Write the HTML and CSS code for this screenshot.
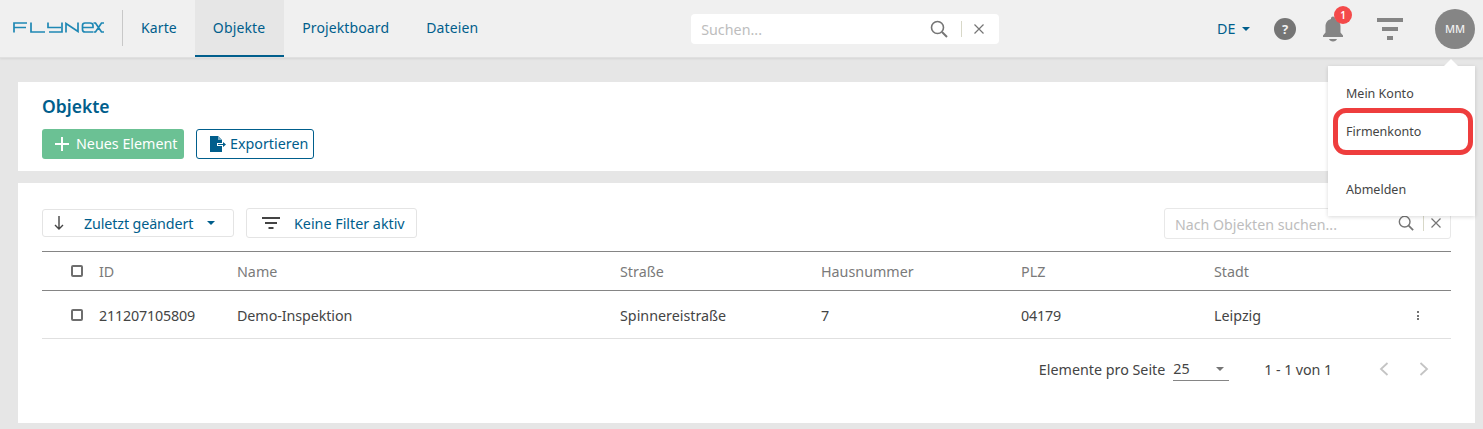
FILE: index.html
```html
<!DOCTYPE html>
<html lang="de">
<head>
<meta charset="utf-8">
<title>Objekte</title>
<link rel="stylesheet" href="styles.css">
</head>
<body>
<header class="topbar">
  <div class="logo">
    <svg width="91" height="11" viewBox="0 0 91 11" fill="none" stroke="#1f88b4" stroke-width="1.700">
      <path d="M14 1H1V10.500M1 5.500H13"/>
      <path d="M18 .5V10H32"/>
      <path d="M35 .5V5.500H48M49 .5V10H36"/>
      <path d="M53 10.500V1.500L65 9.500V.5"/>
      <path d="M69.500 5.500H79M80 10H72Q69.500 10 69.500 7.500V3.500Q69.500 1 72 1H77Q80 1 80 3.500V5.500H79"/>
      <path d="M80.500 1H82.500L85.500 5.500L82.500 10H80.500M91 1H88.500L85.500 5.500L88.500 10H91"/>
    </svg>
  </div>
  <nav class="nav">
    <a class="nav-item">Karte</a>
    <a class="nav-item active">Objekte</a>
    <a class="nav-item">Projektboard</a>
    <a class="nav-item">Dateien</a>
  </nav>
  <div class="search">
    <span class="search-ph">Suchen...</span>
    <svg class="i-search" width="18" height="18" viewBox="0 0 18 18" fill="none" stroke="#757575" stroke-width="1.6"><circle cx="7.5" cy="7.5" r="6"/><path d="M12 12l5 5" stroke-width="2"/></svg>
    <span class="sep"></span>
    <svg width="10" height="10" viewBox="0 0 10 10" stroke="#757575" stroke-width="1.2"><path d="M.5.5l9 9M9.5.5l-9 9"/></svg>
  </div>
  <div class="actions">
    <span class="lang">DE<i class="caret"></i></span>
    <span class="help">?</span>
    <span class="bell">
      <svg width="22" height="28" viewBox="0 0 22 28" fill="#858585"><path d="M11 1.500c-1.100 0-2 .9-2 2v.6C5.500 5 3.500 8 3.500 11.500v6L1 20.500V22h20v-1.500l-2.500-3v-6c0-3.500-2-6.500-5.500-7.400v-.6c0-1.100-.9-2-2-2z"/><path d="M7 24h8c-.5 1.500-2 2.500-4 2.500S7.500 25.500 7 24z"/></svg>
      <b class="badge">1</b>
    </span>
    <svg class="filter-top" width="26" height="22" viewBox="0 0 26 22" fill="#858585"><rect width="26" height="4"/><rect x="5" y="9" width="16" height="4"/><rect x="10" y="18" width="6" height="4"/></svg>
    <span class="avatar">MM</span>
  </div>
</header>

<main class="page">
  <section class="card head-card">
    <h1>Objekte</h1>
    <div class="btns">
      <button class="btn-new"><svg width="16" height="16" viewBox="0 0 16 16" stroke="#fff" stroke-width="2"><path d="M8 1v14M1 8h14"/></svg><span>Neues Element</span></button>
      <button class="btn-export"><svg width="16" height="16" viewBox="0 0 16 16" fill="#005e8c"><path d="M0 0h8l4 4v3H7v3h5v6H0z"/><path d="M8 0v4h4z" fill="#7fb0c8"/><path d="M8 8h5V6l3 2.500L13 11V9H8z"/></svg><span>Exportieren</span></button>
    </div>
  </section>

  <section class="card list-card">
    <div class="toolbar">
      <button class="tool sort">
        <svg width="10" height="14" viewBox="0 0 10 14" fill="none" stroke="#444" stroke-width="1.400"><path d="M5 0v13M1 9l4 4 4-4"/></svg>
        <span>Zuletzt geändert</span><i class="caret"></i>
      </button>
      <button class="tool filter">
        <svg width="18" height="12" viewBox="0 0 18 12" fill="#444"><rect width="18" height="2"/><rect x="3" y="5" width="12" height="2"/><rect x="6.500" y="10" width="5" height="2"/></svg>
        <span>Keine Filter aktiv</span>
      </button>
      <div class="list-search">
        <span class="list-ph">Nach Objekten suchen...</span>
        <svg width="16" height="16" viewBox="0 0 18 18" fill="none" stroke="#757575" stroke-width="1.600"><circle cx="7.500" cy="7.500" r="6"/><path d="M12 12l5 5" stroke-width="2"/></svg>
        <span class="sep"></span>
        <svg width="10" height="10" viewBox="0 0 10 10" stroke="#757575" stroke-width="1.200"><path d="M.5.5l9 9M9.500.5l-9 9"/></svg>
      </div>
    </div>

    <div class="row header-row">
      <span class="cb"></span><span>ID</span><span>Name</span><span>Straße</span><span>Hausnummer</span><span>PLZ</span><span>Stadt</span><span></span>
    </div>
    <div class="row data-row">
      <span class="cb"></span><span class="num">211207105809</span><span class="tight">Demo-Inspektion</span><span>Spinnereistraße</span><span>7</span><span class="num">04179</span><span>Leipzig</span>
      <span class="dots"><i></i><i></i><i></i></span>
    </div>

    <div class="pager">
      <span>Elemente pro Seite</span>
      <span class="size"><span>25</span><i class="caret grey"></i></span>
      <span class="range">1 - 1 von 1</span>
      <svg class="chev" width="10" height="14" viewBox="0 0 10 14" fill="none" stroke="#c4c4c4" stroke-width="1.800"><path d="M8.500 1L2 7l6.500 6"/></svg>
      <svg class="chev" width="10" height="14" viewBox="0 0 10 14" fill="none" stroke="#c4c4c4" stroke-width="1.800"><path d="M1.500 1L8 7l-6.500 6"/></svg>
    </div>
  </section>
</main>

<div class="menu">
  <a>Mein Konto</a>
  <a>Firmenkonto</a>
  <a class="logout">Abmelden</a>
</div>
<div class="highlight"></div>
</body>
</html>
```
FILE: styles.css
```css
* { box-sizing: border-box; }
html, body { margin: 0; height: 429px; overflow: hidden; }
body {
  background: #e6e6e6;
  font-family: "Noto Sans", "Liberation Sans", sans-serif;
  font-size: 14.3px;
  color: #444;
  position: relative;
}
button { font: inherit; cursor: pointer; }

.topbar {
  height: 58px;
  background: #f0f0f0;
  border-bottom: 1px solid #e0e0e0;
  box-shadow: 0 1px 2px rgba(0,0,0,.08);
  display: flex;
  align-items: center;
  color: #005e8c;
}
.logo {
  width: 123px;
  height: 36px;
  margin-top: -2px;
  padding-left: 13px;
  display: flex;
  align-items: center;
  border-right: 1px solid #c8c8c8;
}
.nav { display: flex; height: 100%; }
.nav-item {
  display: flex;
  align-items: center;
  padding: 0 19px 0 18px;
  border-bottom: 2px solid transparent;
  font-size: 14px;
  letter-spacing: .12px;
}
.nav-item:first-child { padding-right: 18px; }
.nav-item.active { background: #e6e6e6; border-bottom-color: #005e8c; }

.search {
  width: 308px;
  height: 30px;
  margin-left: 194px;
  background: #fff;
  border-radius: 4px;
  display: flex;
  align-items: center;
  padding: 0 15px 0 10px;
}
.search-ph { flex: 1; color: #bdbdbd; padding-top: 2px; }
.sep { width: 1px; height: 16px; background: #d8d8c8; margin: 0 12px 0 13px; }

.actions {
  margin-left: auto;
  display: flex;
  align-items: center;
  padding-right: 8px;
}
.lang { display: flex; align-items: center; width: 57px; }
.caret {
  display: inline-block;
  width: 0; height: 0;
  border: 4.500px solid transparent;
  border-top-color: #005e8c;
  border-bottom: 0;
  margin-left: 7px;
}
.caret.grey { border-top-color: #757575; }
.help {
  width: 22px; height: 22px;
  border-radius: 50%;
  background: #757575;
  color: #f0f0f0;
  font-size: 13px;
  font-weight: 700;
  display: flex; align-items: center; justify-content: center;
}
.bell { position: relative; margin-left: 26px; display: flex; }
.badge {
  position: absolute;
  left: 12px; top: -9px;
  width: 18px; height: 18px;
  border-radius: 50%;
  background: #f44a4a;
  color: #fff;
  font-size: 10px;
  font-weight: 600;
  display: flex; align-items: center; justify-content: center;
}
.filter-top { margin-left: 33px; margin-top: 1px; }
.avatar {
  margin-left: 32px;
  width: 40px; height: 40px;
  border-radius: 50%;
  background: #858585;
  color: #f0f0f0;
  font-size: 11px;
  font-weight: 500;
  display: flex; align-items: center; justify-content: center;
}

.page { padding: 24px 8px 0 18px; }
.card { background: #fff; }
.head-card { height: 89px; padding: 12px 24px 0; }
h1 { margin: 0; font-size: 17.500px; line-height: 24px; font-weight: 600; color: #005e8c; }
.btns { display: flex; gap: 12px; margin-top: 11px; }
.btn-new, .btn-export {
  height: 30px;
  border-radius: 3px;
  display: flex;
  align-items: center;
  padding: 0;
}
.btns span { margin-top: -2px; }
.btn-new {
  width: 142px;
  background: #6bc194;
  border: 0;
  color: #fff;
  padding-left: 12px;
  gap: 6px;
}
.btn-export {
  width: 118px;
  background: #fff;
  border: 1px solid #005e8c;
  color: #005e8c;
  padding-left: 13px;
  gap: 4px;
}

.list-card { height: 240px; margin-top: 12px; padding: 25px 24px 0; }
.toolbar { display: flex; align-items: center; height: 31px; }
.tool {
  background: #fff;
  border: 1px solid #e4e4e4;
  border-radius: 3px;
  display: flex;
  align-items: center;
  color: #005e8c;
  padding: 0;
  margin-bottom: 1px;
}
.sort { width: 192px; height: 28px; padding-left: 11px; }
.sort span { margin-left: 20px; letter-spacing: -.12px; }
.sort .caret { margin-left: 14px; }
.filter { width: 171px; height: 30px; margin-left: 12px; padding-left: 15px; }
.filter span { margin-left: 14px; }
.list-search {
  margin-left: auto;
  width: 287px;
  height: 31px;
  margin-bottom: 1px;
  border: 1px solid #e8e8e8;
  border-radius: 3px;
  display: flex;
  align-items: center;
  padding: 0 9px 0 10px;
}
.list-ph { flex: 1; color: #bdbdbd; padding-top: 3px; font-size: 14.200px; }
.list-search .sep { margin: 0 7px 0 9px; }

.row {
  display: grid;
  grid-template-columns: 57px 138px 383px 201px 200px 193px 1fr 40px;
  align-items: center;
}
.header-row {
  height: 40px;
  margin-top: 12px;
  border-top: 1px solid #858585;
  border-bottom: 1px solid #858585;
  color: #7a7a7a;
}
.data-row { height: 48px; padding-top: 2px; border-bottom: 1px solid #e0e0e0; }
.data-row .cb { margin-bottom: 2px; }
.num { letter-spacing: -.18px; }
.tight { letter-spacing: -.08px; }
.cb {
  width: 12px; height: 12px;
  margin-left: 29px;
  border: 2px solid #6e6e6e;
  border-radius: 2px;
}
.dots { display: flex; flex-direction: column; gap: 1.500px; align-items: center; width: 3px; margin-left: 5px; }
.dots i { width: 2px; height: 2px; background: #444; border-radius: 50%; }

.pager {
  display: flex;
  align-items: center;
  height: 60px;
  padding-right: 22px;
  justify-content: flex-end;
}
.size {
  width: 56px;
  margin-left: 8px;
  height: 24px;
  border-bottom: 1px solid #858585;
  display: flex;
  align-items: center;
  justify-content: space-between;
  padding-right: 5px;
}
.range { margin-left: 35px; margin-right: 47px; letter-spacing: -.1px; }
.chev + .chev { margin-left: 30px; }

.menu {
  position: absolute;
  left: 1328px; top: 66px;
  width: 147px; height: 150px;
  background: #fff;
  box-shadow: 0 1px 4px rgba(0,0,0,.15);
  font-size: 12.500px;
  padding-top: 9px;
}
.menu::before {
  content: "";
  position: absolute;
  left: 115px; top: -7px;
  border: 8px solid transparent;
  border-top: 0;
  border-bottom-color: #fff;
}
.menu a { display: block; height: 38px; line-height: 38px; padding-left: 18px; }
.menu .logout { margin-top: 20px; }
.highlight {
  position: absolute;
  left: 1333px; top: 108px;
  width: 140px; height: 47px;
  border: 5px solid #ee3d3d;
  border-radius: 13px;
}
```
